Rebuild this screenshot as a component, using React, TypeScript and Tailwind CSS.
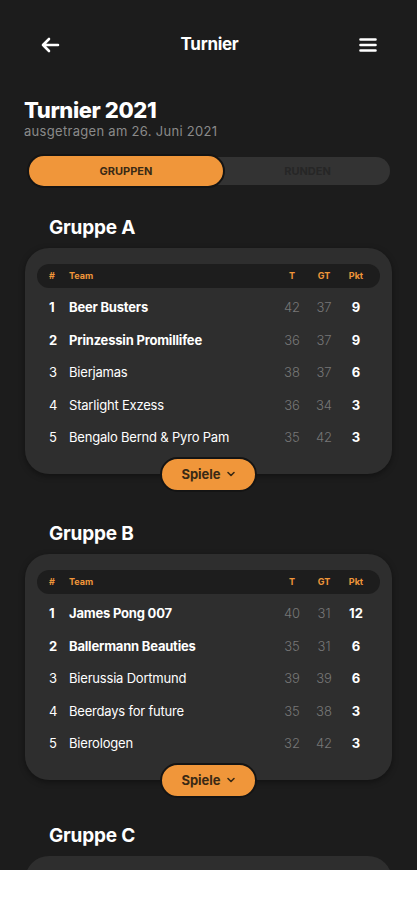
import React from "react";

type Row = { n: number; name: string; t: number; gt: number; pkt: number; bold?: boolean };

const groups: { title: string; rows: Row[] }[] = [
  {
    title: "Gruppe A",
    rows: [
      { n: 1, name: "Beer Busters", t: 42, gt: 37, pkt: 9, bold: true },
      { n: 2, name: "Prinzessin Promillifee", t: 36, gt: 37, pkt: 9, bold: true },
      { n: 3, name: "Bierjamas", t: 38, gt: 37, pkt: 6 },
      { n: 4, name: "Starlight Exzess", t: 36, gt: 34, pkt: 3 },
      { n: 5, name: "Bengalo Bernd & Pyro Pam", t: 35, gt: 42, pkt: 3 },
    ],
  },
  {
    title: "Gruppe B",
    rows: [
      { n: 1, name: "James Pong 007", t: 40, gt: 31, pkt: 12, bold: true },
      { n: 2, name: "Ballermann Beauties", t: 35, gt: 31, pkt: 6, bold: true },
      { n: 3, name: "Bierussia Dortmund", t: 39, gt: 39, pkt: 6 },
      { n: 4, name: "Beerdays for future", t: 35, gt: 38, pkt: 3 },
      { n: 5, name: "Bierologen", t: 32, gt: 42, pkt: 3 },
    ],
  },
];

function Group({ title, rows }: { title: string; rows: Row[] }) {
  return (
    <div className="flex flex-col">
      <h2 className="ml-[49px] text-[19px] leading-[24px] font-bold text-white tracking-[-0.2px]">{title}</h2>
      <div className="mx-[25px] mt-[8px] rounded-[24px] bg-[#2e2e2e] px-[12px] pt-[16px] pb-[20px] shadow-[0_2px_6px_rgba(0,0,0,0.4)]">
        <div className="grid grid-cols-[20px_1fr_32px_32px_32px] items-center h-[24px] rounded-full bg-[#1d1d1d] pl-[12px] pr-[8px] text-[9px] font-bold text-[#f0963a]">
          <span>#</span>
          <span>Team</span>
          <span className="text-center">T</span>
          <span className="text-center">GT</span>
          <span className="text-center">Pkt</span>
        </div>
        <div className="mt-[4px] flex flex-col">
          {rows.map((r) => (
            <div
              key={r.n}
              className="grid grid-cols-[20px_1fr_32px_32px_32px] items-center h-[32.4px] pl-[12px] pr-[8px] text-[13px] text-white"
            >
              <span className={r.bold ? "font-bold" : "font-normal"}>{r.n}</span>
              <span className={r.bold ? "font-bold tracking-[-0.2px]" : "font-normal tracking-[-0.2px]"}>{r.name}</span>
              <span className="text-center font-light text-[#777777]">{r.t}</span>
              <span className="text-center font-light text-[#777777]">{r.gt}</span>
              <span className="text-center font-bold">{r.pkt}</span>
            </div>
          ))}
        </div>
      </div>
      <div className="-mt-[17px] flex justify-center">
        <button className="flex h-[35px] w-[97px] items-center justify-center gap-[5px] rounded-full border-2 border-[#141414] bg-[#f0963a] text-[13px] font-bold text-[#3a2a15]">
          Spiele
          <svg width="10" height="10" viewBox="0 0 10 10" fill="none">
            <path d="M2 3.5 L5 6.5 L8 3.5" stroke="#3a2a15" strokeWidth="1.6" strokeLinecap="round" strokeLinejoin="round" />
          </svg>
        </button>
      </div>
    </div>
  );
}

export default function App() {
  return (
    <div className="w-full bg-white" style={{ fontFamily: "Inter, 'Noto Sans', sans-serif" }}>
      <div className="h-[870px] overflow-hidden bg-[#1c1c1c]">
        <header className="flex h-[24px] items-center justify-between px-[40px] mt-[33px]">
          <svg width="20" height="16" viewBox="0 0 20 16" fill="none">
            <path d="M18 8 H3 M9 2 L3 8 L9 14" stroke="white" strokeWidth="2.6" strokeLinecap="round" strokeLinejoin="round" />
          </svg>
          <h1 className="text-[17px] font-bold text-white tracking-[-0.3px]">Turnier</h1>
          <svg width="18" height="16" viewBox="0 0 18 16" fill="none">
            <path d="M1.5 2.5 H16.5 M1.5 8 H16.5 M1.5 13.5 H16.5" stroke="white" strokeWidth="2.6" strokeLinecap="round" />
          </svg>
        </header>
        <div className="mt-[39px] px-[24px]">
          <div className="text-[22px] leading-[28px] font-extrabold text-white tracking-[-0.4px]">Turnier 2021</div>
          <div className="text-[13px] leading-[14px] text-[#8a8a8a] tracking-[0.3px]">ausgetragen am 26. Juni 2021</div>
        </div>
        <div className="relative mx-[27px] mt-[16px] h-[34px]">
          <div className="absolute left-[190px] right-0 top-[3px] bottom-[3px] rounded-r-full bg-[#333333]" />
          <div className="relative flex h-full">
            <div className="flex w-[198px] items-center justify-center rounded-full border-2 border-[#141414] bg-[#f0963a] text-[11px] font-bold text-[#3a2a15]">
              GRUPPEN
            </div>
            <div className="flex flex-1 items-center justify-center text-[11px] font-bold text-[#262626]">RUNDEN</div>
          </div>
        </div>
        <div className="mt-[28px] flex flex-col gap-[30px]">
          {groups.map((g) => (
            <Group key={g.title} title={g.title} rows={g.rows} />
          ))}
          <div className="flex flex-col -mt-[4px]">
            <h2 className="ml-[49px] text-[19px] leading-[24px] font-bold text-white tracking-[-0.2px]">Gruppe C</h2>
            <div className="mx-[25px] mt-[8px] h-[200px] rounded-[24px] bg-[#2e2e2e]" />
          </div>
        </div>
      </div>
      <div className="h-[30px] bg-white" />
    </div>
  );
}
